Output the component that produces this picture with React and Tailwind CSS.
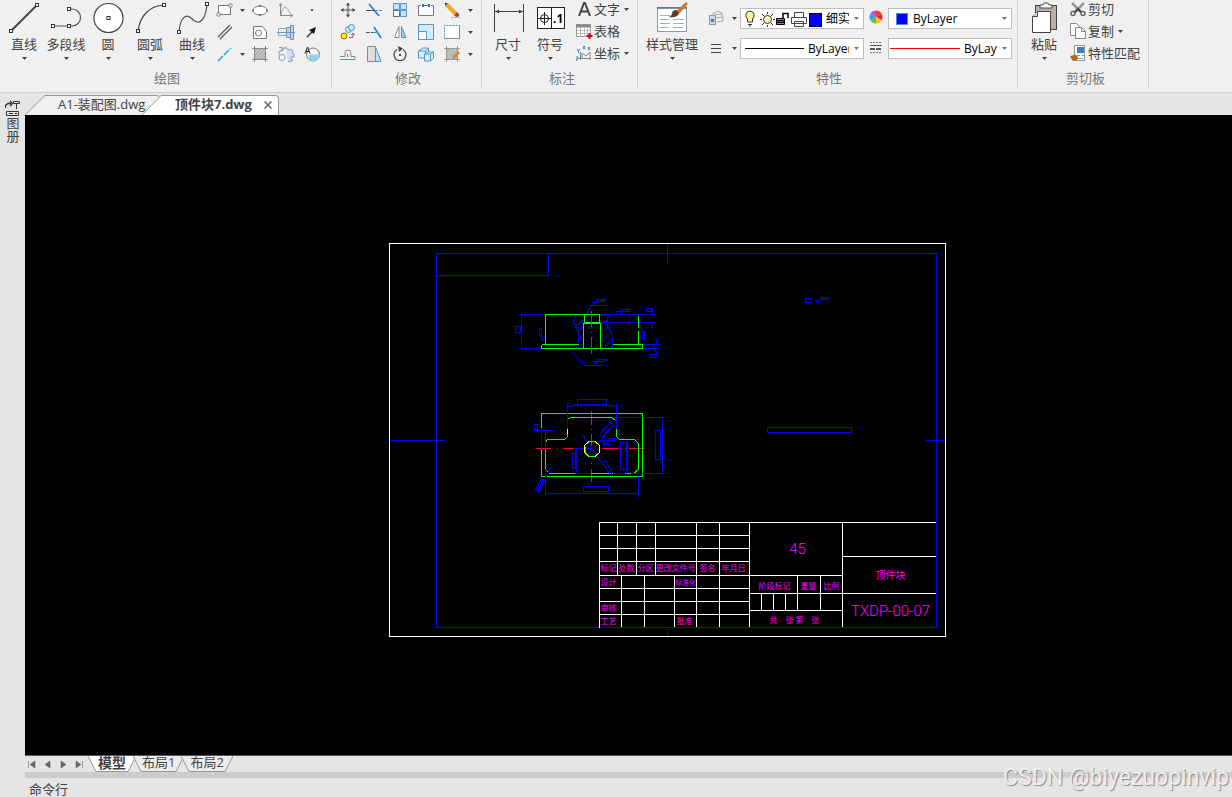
import { useState } from "react";
import clsx from "clsx";

/* ---------- shared bits ---------- */

function Caret({ className = "text-[#444]" }) {
  return (
    <svg width="5" height="3" viewBox="0 0 5 3" className={clsx("shrink-0", className)}>
      <path d="M0 0h5L2.5 3z" fill="currentColor" />
    </svg>
  );
}

function Dot({ x, y }) {
  return <rect x={x - 1.5} y={y - 1.5} width="3" height="3" fill="#fff" stroke="#333" />;
}

function Icon({ children, size = 18 }) {
  return (
    <svg width={size} height={size} viewBox="0 0 18 18" fill="none" className="shrink-0">
      {children}
    </svg>
  );
}

function Group({ title, children, className }) {
  return (
    <section className={clsx("flex h-[88px] shrink-0 flex-col border-r border-[#d2d2d2]", className)}>
      <div className="flex h-[70px]">{children}</div>
      <h2 className="text-center text-[13px] leading-4 text-[#777]">{title}</h2>
    </section>
  );
}

function BigButton({ label, icon, wide }) {
  return (
    <button className={clsx("flex flex-col items-center", wide ? "w-[62px]" : "w-[42px]")}>
      <svg width={wide ? 62 : 42} height="36" fill="none">
        {icon}
      </svg>
      <span className="text-[13px] leading-4 whitespace-nowrap">{label}</span>
      <span className="flex h-3 items-center">
        <Caret />
      </span>
    </button>
  );
}

function ToolButton({ name, children }) {
  return (
    <button aria-label={name} className="flex h-[22px] items-center justify-center pb-[2px]">
      {children}
    </button>
  );
}

function ListButton({ label, icon, caret }) {
  return (
    <button className="flex h-[22px] items-center pb-1">
      <span className="flex w-5 justify-center">{icon}</span>
      <span className="text-[13px] leading-4 whitespace-nowrap">{label}</span>
      {caret && (
        <span className="flex w-3 justify-center">
          <Caret />
        </span>
      )}
    </button>
  );
}

function Combo({ label, options, children }) {
  return (
    <div className="flex h-[21px] items-center border border-[#bdbdbd] bg-white">
      {children}
      <select
        aria-label={label}
        className="h-full min-w-0 flex-1 appearance-none overflow-hidden bg-transparent text-[12px] text-clip text-black outline-none"
      >
        {options.map((o) => (
          <option key={o}>{o}</option>
        ))}
      </select>
      <span className="flex w-[14px] justify-center">
        <Caret className="text-[#777]" />
      </span>
    </div>
  );
}

/* ---------- big icons ---------- */

const lineIcon = (
  <>
    <path d="M8 31L34 5" stroke="#444" strokeWidth="2" />
    <Dot x={8} y={31} />
    <Dot x={34} y={5} />
  </>
);

const polylineIcon = (
  <>
    <path d="M8 26h16h3a8.5 8.5 0 0 0 0-17h-3" stroke="#555" strokeWidth="1.2" />
    <Dot x={8} y={26} />
    <Dot x={24} y={26} />
    <Dot x={24} y={9} />
  </>
);

const circleIcon = (
  <>
    <circle cx="21.5" cy="18" r="14.5" fill="#fff" stroke="#444" strokeWidth="1.2" />
    <Dot x={21.5} y={18} />
  </>
);

const arcIcon = (
  <>
    <path d="M9 31C11 16 20 6 35 5" stroke="#444" strokeWidth="1.2" />
    <Dot x={9} y={31} />
    <Dot x={35} y={5} />
  </>
);

const splineIcon = (
  <>
    <path d="M8 32C9 18 15 13 20 18C29 28 35 18 36 4" stroke="#555" strokeWidth="1.2" />
    <Dot x={8} y={32} />
    <Dot x={36} y={4} />
  </>
);

const dimensionIcon = (
  <>
    <path d="M7.5 4v28M36.500 4v28M8 11.500h28" stroke="#444" />
    <path d="M8 11.500l4-2v4zM36 11.500l-4-2v4z" fill="#444" />
  </>
);

const symbolIcon = (
  <>
    <rect x="8.500" y="7.500" width="27" height="21" fill="#fff" stroke="#222" />
    <path d="M22.500 8v20M15.500 12v13M9 18.500h13" stroke="#222" />
    <circle cx="15.500" cy="18.500" r="4" stroke="#222" />
    <text x="24" y="23" fontSize="12" fontWeight="bold" fill="#000">
      .1
    </text>
  </>
);

const styleIcon = (
  <>
    <rect x="16.500" y="7.500" width="29" height="24" fill="#fff" stroke="#8a9bb0" />
    <path d="M16 8h30" stroke="#58697c" strokeWidth="1.5" />
    <path d="M19 15.500h10M19 19.500h9M32 19.500h11M19 23.500h10M32 23.500h11M19 27.500h9M32 27.500h10" stroke="#9db3c8" />
    <path d="M45 2l-10 9 3 3 8-9c1-2 0-3-1-3z" fill="#c87a32" />
    <path d="M35 10c-3 0-4 2-4 4-1 2-2 3-4 3 5 1 10 0 11-4z" fill="#5a3a20" />
  </>
);

const pasteIcon = (
  <>
    <rect x="12.500" y="5.500" width="21" height="24" fill="#b8b0a4" stroke="#444" />
    <path d="M17 8V5h3l1-2h4l1 2h3v3z" fill="#fff" stroke="#444" />
    <path d="M9.500 16.500l5-5h13v21h-18z" fill="#fff" stroke="#444" />
    <path d="M9.500 16.500h5v-5" fill="#ddd" stroke="#444" />
  </>
);

/* ---------- small icons ---------- */

const icons = {
  rect: (
    <Icon>
      <rect x="2.500" y="4.500" width="12" height="9" fill="#fff" stroke="#777" />
      <path d="M1 12h3v3H1zM13 3h3v3h-3z" fill="#fff" stroke="#888" />
    </Icon>
  ),
  ellipse: (
    <Icon>
      <ellipse cx="9" cy="9.500" rx="7" ry="4.500" fill="#fff" stroke="#777" />
      <path d="M1 8.500h2v2H1zM15 8.500h2v2h-2zM8 4h2v2H8zM8 13h2v2H8z" fill="#777" />
    </Icon>
  ),
  graph: (
    <Icon>
      <path d="M3.500 3v12M3 14.500h12" stroke="#888" />
      <path d="M4 14C6 4 9 4 13 12M2 5l1.500-3L5 5M13 12.500l3 2-3 2" stroke="#999" />
    </Icon>
  ),
  point: (
    <Icon>
      <rect x="8" y="8" width="2" height="2" fill="#555" />
    </Icon>
  ),
  doubleLine: (
    <Icon>
      <path d="M2 14L14 2M4 16L16 4" stroke="#555" strokeWidth="1.2" />
    </Icon>
  ),
  region: (
    <Icon>
      <path d="M2.500 3.500h9l4 5v7h-13z" fill="#fff" stroke="#777" />
      <circle cx="7.500" cy="10" r="3" fill="#fff" stroke="#777" />
    </Icon>
  ),
  shaft: (
    <Icon>
      <path d="M1.500 5.500h8v7h-8z" fill="#e4eef8" stroke="#9aa5b0" />
      <path d="M9.500 4.500h4v10h-4zM13.500 2.500h3v14h-3z" fill="#b5d3ee" stroke="#8290a0" />
      <path d="M0 9.500h18" stroke="#5b9bd8" />
    </Icon>
  ),
  arrow: (
    <Icon>
      <path d="M4 14l5-5" stroke="#222" strokeWidth="1.2" />
      <path d="M13 4l-2 7-5-4z" fill="#111" />
    </Icon>
  ),
  blueLine: (
    <Icon>
      <path d="M2 16L15 3" stroke="#29a3dc" strokeWidth="1.500" strokeDasharray="7 1.500" />
    </Icon>
  ),
  hatch: (
    <Icon>
      <rect x="3.500" y="3.500" width="11" height="11" fill="#b4b4b4" stroke="#888" />
      <path d="M1 3.500h16M1 14.500h16M3.500 1v16M14.500 1v16" stroke="#888" />
      <path d="M4 8l4-4M4 12l8-8M6 14l8-8M10 14l4-4" stroke="#ccc" />
    </Icon>
  ),
  gear: (
    <Icon>
      <path
        d="M6 6V3h3V1.500M9 3l3 2 1-1 3 2-1 2 2 1v3h-3v3h2l-2 1.500h-3"
        fill="#cfe1f2"
        stroke="#8aa0b8"
      />
      <circle cx="5" cy="12.500" r="3" fill="#fff" stroke="#7a94b0" />
      <path d="M2 2.500h3v3l-3 1v3" stroke="#7a94b0" />
    </Icon>
  ),
  annoCircle: (
    <Icon>
      <circle cx="10" cy="9.500" r="6.500" fill="#f4f4f4" stroke="#777" />
      <path d="M6 9.500h10.500A6.500 6.500 0 0 1 6 14.500z" fill="#8fd3f2" />
      <path d="M2 8.500L4.500 2 7 8.500M3 6.500h3" stroke="#222" />
    </Icon>
  ),
  move: (
    <Icon>
      <path d="M9 3v4M9 11v4M3 9h4M11 9h4" stroke="#555" />
      <path d="M9 1.500L7 4.500h4zM9 16.500L7 13.500h4zM1.500 9l3-2v4zM16.500 9l-3-2v4z" fill="#444" />
      <rect x="8" y="8" width="2" height="2" fill="#fff" stroke="#555" />
    </Icon>
  ),
  trim: (
    <Icon>
      <path d="M4 3l10 12" stroke="#1f7ad0" strokeWidth="1.500" />
      <path d="M1 9.500h8" stroke="#555" />
      <path d="M10 9.500h7" stroke="#29a3dc" strokeDasharray="3 1" />
    </Icon>
  ),
  array: (
    <Icon>
      <path d="M2.500 2.500h6v6h-6zM9.500 2.500h6v6h-6zM9.500 9.500h6v6h-6z" fill="#bfe3f7" stroke="#5a95be" />
      <path d="M2.500 9.500h6v6h-6z" fill="#fff" stroke="#5a6d80" />
    </Icon>
  ),
  breakAt: (
    <Icon>
      <path d="M4 4.500H1.500v10h15v-10H14M7 4.500h4" fill="#fff" stroke="#777" />
      <path d="M5 3h2v3H5zM11 3h2v3h-2z" fill="#1f7ad0" />
    </Icon>
  ),
  erase: (
    <Icon>
      <path d="M2 2l3 0 9 9-3 3-9-9z" fill="#f5a623" />
      <path d="M11 14l3-3 2 2c1 2-1 3-3 3z" fill="#a3452c" />
      <path d="M2 5V2h3z" fill="#444" />
      <path d="M8 16.500h9" stroke="#bbb" />
    </Icon>
  ),
  copyObj: (
    <Icon>
      <circle cx="5" cy="13" r="3" fill="#ffe500" stroke="#8a7a00" />
      <circle cx="9.500" cy="6.500" r="3" fill="#cfe9f8" stroke="#4a8ec2" />
      <circle cx="12.500" cy="4.500" r="3" fill="#cfe9f8" stroke="#4a8ec2" />
      <path d="M10 14.500h4v-4M12.500 12l1.500-2 1.500 2" stroke="#a55" />
    </Icon>
  ),
  extend: (
    <Icon>
      <path d="M9 4l7 11" stroke="#1f7ad0" strokeWidth="1.500" />
      <path d="M1 9.500h7" stroke="#555" strokeDasharray="4 1" />
      <path d="M8 9.500h5" stroke="#29a3dc" />
    </Icon>
  ),
  mirror: (
    <Icon>
      <path d="M8 3.500v11H3.500z" fill="#fff" stroke="#888" />
      <path d="M10.500 3.500v11H15z" fill="#9ccbea" stroke="#5a95be" />
    </Icon>
  ),
  scale: (
    <Icon>
      <rect x="1.500" y="1.500" width="15" height="15" fill="#cfeafa" stroke="#5a95be" />
      <rect x="1.500" y="8.500" width="8" height="8" fill="#fff" stroke="#5a95be" />
    </Icon>
  ),
  stretch: (
    <Icon>
      <rect x="1.500" y="2.500" width="15" height="13" fill="#fff" stroke="#888" />
      <path d="M1.500 15.500v-13h15" stroke="#fff" />
      <path d="M1.500 15.500v-13h15" stroke="#4a90d0" strokeDasharray="2 1" />
    </Icon>
  ),
  offset: (
    <Icon>
      <path d="M1 11.500h5V8a3 3 0 0 1 6 0v3.500h4v3H1" stroke="#888" />
      <path d="M8.500 12V9M2 14.500h14" stroke="#5a95be" />
    </Icon>
  ),
  taper: (
    <Icon>
      <path d="M2.500 1.500h8v15h-8z" fill="#ddd" stroke="#888" />
      <path d="M10.500 2l5.500 14.500h-5.500z" fill="#bfe3f7" stroke="#5a95be" />
    </Icon>
  ),
  rotate: (
    <Icon>
      <path d="M6 4.500A6 6 0 1 0 12 4.500" stroke="#444" strokeWidth="1.300" />
      <path d="M7 1l5 2.500L8 7z" fill="#444" />
      <rect x="8" y="9" width="2" height="2" fill="#444" />
    </Icon>
  ),
  block: (
    <Icon>
      <path d="M1.500 6l4-3h6v7l-3 3h-7zM1.500 6h7v7M8.500 6l3-3" fill="#d5ecfa" stroke="#5a95be" />
      <path d="M7.500 9l3-2h6v6l-3 3h-6zM7.500 9h6v7M13.500 9l3-2" fill="#d5ecfa" stroke="#5a95be" />
    </Icon>
  ),
  editHatch: (
    <Icon>
      <rect x="3.500" y="3.500" width="11" height="11" fill="#b4b4b4" stroke="#888" />
      <path d="M1 3.500h16M1 14.500h16M3.500 1v16M14.500 1v16" stroke="#999" />
      <path d="M4 9l5-5M4 13l9-9M7 14l7-7" stroke="#d0d0d0" />
      <path d="M15 6l2 2-5 5-3 1 1-3z" fill="#d4883a" />
    </Icon>
  ),
  letterA: (
    <Icon>
      <path d="M4 16L9 3h1l5 13M6 11.500h7" stroke="#444" strokeWidth="2" />
    </Icon>
  ),
  table: (
    <Icon>
      <rect x="1.500" y="2.500" width="14" height="12" fill="#fff" stroke="#999" />
      <path d="M1 4h15" stroke="#888" strokeWidth="3" />
      <path d="M2 8.500h14M2 11.500h14M5.500 5v10M9.500 5v10M12.500 5v10" stroke="#bbb" />
      <path d="M14.500 11v6M11.500 14h6" stroke="#d00020" strokeWidth="2" />
    </Icon>
  ),
  coords: (
    <Icon>
      <path d="M5.500 8v8M3 14.500h13M7 14V9l4 3 4-4v8" stroke="#888" />
      <path d="M2 5l1.500 2L5 5M3.500 7v2M8 2l2 3M10 2L8 5M13 3l2 3M15 3l-2 3M1 13h2l-2 3h2" stroke="#3a8ac8" />
    </Icon>
  ),
  layerStates: (
    <Icon>
      <path d="M2.500 6.500h6v9h-6z" fill="#cfdbe6" stroke="#8a97a5" />
      <path d="M4 10h3v3H4z" fill="#3a7fc0" />
      <path d="M5 5l6-3 5 3M7 6l7-1 2 3M9 9l7-1v4l-6 1" stroke="#aaa" />
    </Icon>
  ),
  lines: (
    <Icon>
      <path d="M4 5.500h10M4 9.500h10M4 13.500h10" stroke="#444" />
    </Icon>
  ),
  wheel: (
    <Icon>
      <path d="M9 9V2.500a6.500 6.500 0 0 1 5.600 3.250z" fill="#f33" />
      <path d="M9 9l5.600-3.250a6.500 6.500 0 0 1 0 6.500z" fill="#e0284f" />
      <path d="M9 9l5.600 3.250A6.500 6.500 0 0 1 9 15.500z" fill="#f7c325" />
      <path d="M9 9v6.500a6.500 6.500 0 0 1-5.600-3.250z" fill="#5cc83b" />
      <path d="M9 9l-5.600 3.250a6.500 6.500 0 0 1 0-6.500z" fill="#2f9be8" />
      <path d="M9 9L3.400 5.750A6.500 6.500 0 0 1 9 2.500z" fill="#a45de5" />
    </Icon>
  ),
  weights: (
    <Icon>
      <path d="M3 4.500h12M3 14.500h12" stroke="#777" strokeDasharray="2 1" />
      <path d="M3 7.500h12" stroke="#555" />
      <path d="M3 11h12" stroke="#555" strokeWidth="2" strokeDasharray="5 1" />
    </Icon>
  ),
  cut: (
    <Icon>
      <path d="M3 3l9 9M15 3l-9 9" stroke="#999" strokeWidth="2.500" />
      <circle cx="4" cy="13.500" r="2" stroke="#666" strokeWidth="1.500" />
      <circle cx="14" cy="13.500" r="2" stroke="#666" strokeWidth="1.500" />
      <path d="M6 12l3-3 3 3" stroke="#444" strokeWidth="2" />
    </Icon>
  ),
  copy: (
    <Icon>
      <path d="M1.500 1.500h6l3 3v9h-9z" fill="#fff" stroke="#888" />
      <path d="M6.500 5.500h6l4 4v7h-10z" fill="#fff" stroke="#888" />
      <path d="M12.500 5.500v4h4" stroke="#888" />
    </Icon>
  ),
  match: (
    <Icon>
      <rect x="5.500" y="1.500" width="10" height="15" fill="#fff" stroke="#8a97a5" />
      <path d="M8 3h7v6H8z" fill="#3a7fc0" />
      <path d="M8 11.500h3M8 14.500h6M13 11.500h2" stroke="#8a97a5" />
      <path d="M1 12c3 0 3-2 6-1l2 2c0 3-4 5-6 3z" fill="#b5651d" />
    </Icon>
  ),
};

/* ---------- ribbon ---------- */

function Ribbon() {
  return (
    <header className="flex h-[93px] border-b border-[#d0d0d0] bg-[#f0f0f0] text-[#444]">
      <Group title="绘图" className="w-[332px] pl-[3px]">
        <BigButton label="直线" icon={lineIcon} />
        <BigButton label="多段线" icon={polylineIcon} />
        <BigButton label="圆" icon={circleIcon} />
        <BigButton label="圆弧" icon={arcIcon} />
        <BigButton label="曲线" icon={splineIcon} />
        <div className="grid grid-cols-[24px_10px_26px_26px_26px] content-start">
          <ToolButton name="矩形">{icons.rect}</ToolButton>
          <ToolButton name="矩形选项">
            <Caret />
          </ToolButton>
          <ToolButton name="椭圆">{icons.ellipse}</ToolButton>
          <ToolButton name="公式曲线">{icons.graph}</ToolButton>
          <ToolButton name="点">{icons.point}</ToolButton>
          <ToolButton name="双线">{icons.doubleLine}</ToolButton>
          <span />
          <ToolButton name="面域">{icons.region}</ToolButton>
          <ToolButton name="轴">{icons.shaft}</ToolButton>
          <ToolButton name="箭头">{icons.arrow}</ToolButton>
          <ToolButton name="构造线">{icons.blueLine}</ToolButton>
          <ToolButton name="构造线选项">
            <Caret />
          </ToolButton>
          <ToolButton name="填充">{icons.hatch}</ToolButton>
          <ToolButton name="齿轮">{icons.gear}</ToolButton>
          <ToolButton name="局部放大">{icons.annoCircle}</ToolButton>
        </div>
      </Group>

      <Group title="修改" className="w-[150px] pl-[3px]">
        <div className="grid grid-cols-[26px_26px_26px_26px_26px_10px] content-start">
          <ToolButton name="移动">{icons.move}</ToolButton>
          <ToolButton name="裁剪">{icons.trim}</ToolButton>
          <ToolButton name="阵列">{icons.array}</ToolButton>
          <ToolButton name="打断">{icons.breakAt}</ToolButton>
          <ToolButton name="删除">{icons.erase}</ToolButton>
          <ToolButton name="删除选项">
            <Caret />
          </ToolButton>
          <ToolButton name="平移复制">{icons.copyObj}</ToolButton>
          <ToolButton name="延伸">{icons.extend}</ToolButton>
          <ToolButton name="镜像">{icons.mirror}</ToolButton>
          <ToolButton name="缩放">{icons.scale}</ToolButton>
          <ToolButton name="拉伸">{icons.stretch}</ToolButton>
          <ToolButton name="拉伸选项">
            <Caret />
          </ToolButton>
          <ToolButton name="等距">{icons.offset}</ToolButton>
          <ToolButton name="过渡">{icons.taper}</ToolButton>
          <ToolButton name="旋转">{icons.rotate}</ToolButton>
          <ToolButton name="分解">{icons.block}</ToolButton>
          <ToolButton name="编辑填充">{icons.editHatch}</ToolButton>
          <ToolButton name="编辑填充选项">
            <Caret />
          </ToolButton>
        </div>
      </Group>

      <Group title="标注" className="w-[156px] pl-[5px]">
        <BigButton label="尺寸" icon={dimensionIcon} />
        <BigButton label="符号" icon={symbolIcon} />
        <div className="flex flex-col items-start pl-[3px]">
          <ListButton label="文字" icon={icons.letterA} caret />
          <ListButton label="表格" icon={icons.table} />
          <ListButton label="坐标" icon={icons.coords} caret />
        </div>
      </Group>

      <Group title="特性" className="w-[380px] pl-[3px]">
        <BigButton label="样式管理" icon={styleIcon} wide />
        <div className="grid grid-cols-[25px_12px_124px_24px_124px] content-start items-start gap-y-2 pt-2">
          <ToolButton name="图层">{icons.layerStates}</ToolButton>
          <ToolButton name="图层选项">
            <Caret />
          </ToolButton>
          <Combo label="当前图层" options={["细实线层", "粗实线层"]}>
            <svg width="81" height="19" fill="none" className="mr-1 shrink-0">
              <path d="M9 2a4.500 4.500 0 0 0-2.500 8v3h5v-3A4.500 4.500 0 0 0 9 2z" fill="#fff3a0" stroke="#333" />
              <path d="M7 15.500h4M8 17h2" stroke="#333" />
              <circle cx="26.500" cy="10.500" r="4" fill="#fff8c0" stroke="#333" />
              <path d="M26.500 3v2M26.500 16v2M19 10.500h2M32 10.500h2M21 5l2 2M32 5l-2 2M21 16l2-2M32 16l-2-2" stroke="#333" />
              <path d="M35.500 9.500h8v6h-8z" fill="#c8c800" stroke="#000" />
              <path d="M35 11.500h9M35 13.500h9M42 9V4.500h5V9" stroke="#000" strokeWidth="1.500" />
              <path d="M53.500 3.500h9v5h-9zM50.500 8.500h15v6h-15zM53.500 12.500h9v5h-9z" fill="#fff" stroke="#444" />
              <rect x="68.500" y="4.500" width="12" height="13" fill="#00f" stroke="#000" />
            </svg>
          </Combo>
          <span className="flex justify-center">{icons.wheel}</span>
          <Combo label="颜色" options={["ByLayer", "ByBlock"]}>
            <span className="mr-[5px] ml-[7px] size-3 shrink-0 border border-[#3a8fe0] bg-[#0000ff]" />
          </Combo>
          <ToolButton name="线宽">{icons.lines}</ToolButton>
          <ToolButton name="线宽选项">
            <Caret />
          </ToolButton>
          <Combo label="线宽" options={["ByLayer", "ByBlock"]}>
            <span className="mr-1 ml-1 h-px w-[59px] shrink-0 bg-black" />
          </Combo>
          <span className="flex justify-center">{icons.weights}</span>
          <Combo label="线型" options={["ByLayer", "ByBlock"]}>
            <span className="mr-1 ml-px h-px w-[70px] shrink-0 bg-[#f00]" />
          </Combo>
        </div>
      </Group>

      <Group title="剪切板" className="w-[131px] pl-[5px]">
        <BigButton label="粘贴" icon={pasteIcon} />
        <div className="flex flex-col items-start pl-[3px]">
          <ListButton label="剪切" icon={icons.cut} />
          <ListButton label="复制" icon={icons.copy} caret />
          <ListButton label="特性匹配" icon={icons.match} />
        </div>
      </Group>
    </header>
  );
}

/* ---------- file tabs ---------- */

function FileTabs() {
  return (
    <nav className="flex h-[22px] items-end bg-[#e5e5e5] text-[13px] text-[#444]">
      <button className="flex h-5 items-stretch">
        <svg width="20" height="20" fill="none">
          <path d="M0 20L20 0.500V20z" fill="#f0f0f0" />
          <path d="M0 20L20 0.500" stroke="#999" />
        </svg>
        <span className="w-[115px] rounded-tr border-t border-[#999] bg-[#f0f0f0] pl-[13px] text-left leading-4 whitespace-nowrap">
          A1-装配图.dwg
        </span>
      </button>
      <div className="-ml-[18px] flex h-5 items-stretch">
        <svg width="19" height="20" fill="none">
          <path d="M0 20L19 0.500V20z" fill="#fff" />
          <path d="M0 20L19 0.500" stroke="#999" />
        </svg>
        <div className="flex w-[118px] items-start justify-between rounded-tr border-t border-r border-[#999] bg-white pr-[6px] pl-[14px]">
          <button className="leading-4 font-bold whitespace-nowrap">顶件块7.dwg</button>
          <button aria-label="关闭" className="flex h-[18px] items-center">
            <svg width="8" height="8" stroke="#666" strokeWidth="1.500">
              <path d="M0.500 0.500l7 7M7.500 0.500l-7 7" />
            </svg>
          </button>
        </div>
      </div>
    </nav>
  );
}

/* ---------- drawing ---------- */

function TitleText({ x, y, size = 8, children }) {
  return (
    <text x={x} y={y} fontSize={size} textAnchor="middle" dominantBaseline="central" fill="#f0f">
      {children}
    </text>
  );
}

const titleCells = [
  [608, 568, "标记"],
  [626, 568, "处数"],
  [645, 568, "分区"],
  [675, 568, "更改文件号"],
  [707, 568, "签名"],
  [733, 568, "年月日"],
  [608, 582, "设计"],
  [685, 582, "标准化", 7],
  [608, 608, "审核"],
  [608, 621, "工艺"],
  [684, 621, "批准"],
  [774, 586, "阶段标记"],
  [808, 586, "重量"],
  [831, 586, "比例"],
  [773, 620, "共"],
  [789, 620, "张"],
  [799, 620, "第"],
  [815, 620, "张"],
];

function Drawing() {
  return (
    <svg
      viewBox="25 115 1207 640"
      className="block h-full w-full"
      fill="none"
      shapeRendering="crispEdges"
      fontFamily="Roboto, 'Noto Sans CJK SC', sans-serif"
    >
      <g transform="translate(0.5 0.5)">
        {/* sheet frame */}
        <path
          d="M436 253h500v374h-500zM436 275h112v-22M667 243v20M667 628v8M389 440h56M925 440h19"
          stroke="#00f"
        />
        <path d="M389 243h556v393h-556z" stroke="#fff" />

        {/* front view */}
        <g stroke="#00f">
          <path d="M519 314h24M600 314h55M521 314v34M519 348h22M642 344h16M642 348h17M600 322h55" />
          <path d="M515 326h5v6h-5zM646 308h5v3h-5zM650 354h6v3h-6zM642 331h2v8h-2z" />
          <path d="M539 327v8l2 1v4h2l1-3h-3v-9h-2M652 307v7M652 322l-1 3 1 4M656 337v5l-1 3M655 349l1 4v4M639 327h2v4" />
          <path d="M585 317l5-12h16M592 302h4l-2 3zM597 299h8l-1 2h-8zM616 311h4v3h-3zM621 309h8l-1 2h-8z" />
          <path d="M569 349l16 16h16M593 361h4l-2 3zM598 359h8l-1 2h-8z" />
          <path d="M576 314l-2 4-1 4 2 4 3 5v9l-1 5-2 3M608 314l-1 5-1 4 4 8 2 7v10" />
          <path d="M585 317l-11 10M582 326l-4 5M582 335l-3 4M582 343l-4 5M601 314v3M607 319l-6 5M607 327l-6 6M610 332l-9 9M611 339l-8 9" />
        </g>
        <g stroke="#0f0">
          <path d="M545 344v-30h54M638 315v12M638 330v14M541 344h37M612 344h30v4H541v-4M584 314v8h15v-8" />
          <path d="M583 348v-25h17v25" />
        </g>
        <path d="M591 310v16M591 331v1M591 336v17" stroke="#f03" />

        {/* top view */}
        <path
          d="M535 448h15M556 448h1M562 448h11M601 448h17M624 448h1M628 448h16M591 410v14M591 428v1M591 433v12M591 462v1M591 468v13"
          stroke="#f03"
        />
        <path d="M541 413h101v63H541z" stroke="#0f0" />
        <path
          d="M567 436v-17l3-2h41l4 3M616 428v8l3 3h15l4 4v26l-5 4H549l-4-4v-27l2-3h17l3-3"
          stroke="#0f0"
        />
        <g stroke="#00f">
          <path d="M567 403v25M616 403v25M567 406h4l1-1h40l1 1h3M577 399h29v5H577z" />
          <path d="M611 417h53M612 473h12M630 473h34M662 418v55M655 430h5v29h-5z" />
          <path d="M545 468v28M638 474v22M545 493h93M583 486h25v5H583z" />
          <path d="M533 430h20M534 424h3v5h-3zM541 427v21M545 427v21" />
          <path d="M550 467l-5 11M541 478l3 2-6 12-3-2zM543 479l-6 12" />
          <path d="M574 448h17M576 448v25M574 473h16M572 453h3v15h-3z" />
          <path d="M620 442h7v27h-7zM626 440v33" />
          <path d="M582 435l19 27M581 460l16-16M597 444l16-20M599 434l11-12 3 2-11 12zM602 462l3-2 7 12-2 3z" />
          <path d="M602 444h10M602 440h6l-4 4zM609 438h7l-1 2h-8z" />
        </g>
        <path d="M567 428v5" stroke="#ff0" />
        <circle cx="591.5" cy="448.5" r="8" stroke="#ff0" />
        <path d="M586 444l3-3h5l3 3M586 453l3 3h5l3-3M585 446v6" stroke="#0f0" />

        {/* loose notes */}
        <path
          d="M805 298h6v4h-6zM815 300h4l-2 3zM820 297h8l-1 2h-7zM767 427h84v5h-84z"
          stroke="#00f"
        />

        {/* title block */}
        <g stroke="#fff">
          <path d="M599 627V522h336M599 535h150M599 548h150M599 561h150M599 575h243M599 588h150M599 601h150M599 614h150" />
          <path d="M617 522v53M636 522v53M655 522v53M696 522v105M719 522v105M749 522v105" />
          <path d="M621 575v52M644 575v52M674 575v52M842 522v105" />
          <path d="M749 593h93M749 610h93M797 575v35M820 575v35M761 593v17M773 593v17M785 593v17" />
          <path d="M842 556h93M842 593h93" />
        </g>
        <path d="M599 627h337" stroke="#00f" />
        {titleCells.map(([x, y, label, size]) => (
          <TitleText key={`${x}-${y}`} x={x} y={y} size={size}>
            {label}
          </TitleText>
        ))}
        <g fontWeight="300">
          <TitleText x={797} y={548} size={15}>
            45
          </TitleText>
          <TitleText x={890} y={610} size={15}>
            TXDP-00-07
          </TitleText>
        </g>
        <TitleText x={890} y={575} size={10}>
          顶件块
        </TitleText>
      </g>
    </svg>
  );
}

/* ---------- layout tabs ---------- */

const navArrows = [
  ["第一个", "M1.5 1v7M8 1v7L3 4.500z"],
  ["上一个", "M7 1v7L2 4.500z"],
  ["下一个", "M2 1v7l5-3.500z"],
  ["最后一个", "M7.500 1v7M1 1v7l5-3.500z"],
];

function LayoutTabs({ active, onSelect }) {
  return (
    <div className="flex h-[17px] items-start border-t border-[#555] bg-[#e5e5e5] pl-px text-[#444]">
      <div className="flex h-4 items-center gap-[7px] pr-1 pl-px">
        {navArrows.map(([name, d]) => (
          <button key={name} aria-label={name}>
            <svg width="9" height="9" fill="#666" stroke="#666" strokeWidth="0.600">
              <path d={d} />
            </svg>
          </button>
        ))}
      </div>
      {["模型", "布局1", "布局2"].map((name) => {
        const on = name === active;
        return (
          <button key={name} onClick={() => onSelect(name)} className="-mr-[3px] flex h-4">
            <svg width="8" height="16" fill="none">
              <path d="M0 0L8 15.500V0z" fill={on ? "#fff" : "#ececec"} />
              <path d="M0 0L8 15.500" stroke="#999" />
            </svg>
            <span
              className={clsx(
                "h-4 border-b border-[#999] leading-[13px] whitespace-nowrap",
                on ? "bg-white px-[2px] text-[14px] font-bold" : "bg-[#ececec] px-px text-[13px]"
              )}
            >
              {name}
            </span>
            <svg width="8" height="16" fill="none">
              <path d="M8 0L0 15.500V0z" fill={on ? "#fff" : "#ececec"} />
              <path d="M8 0L0 15.500" stroke="#999" />
            </svg>
          </button>
        );
      })}
    </div>
  );
}

export default function App() {
  const [active, setActive] = useState("模型");

  return (
    <div className="relative flex h-screen flex-col overflow-hidden bg-[#e5e5e5] font-['Open_Sans','Noto_Sans_CJK_SC',sans-serif]">
      <Ribbon />
      <div className="flex min-h-0 flex-1">
        <aside className="flex w-[25px] shrink-0 flex-col items-center pt-[7px] text-[#444]">
          <svg width="15" height="17" fill="none" stroke="#333">
            <path d="M0.500 8V5.500L3 3.500h3M5 1l2.500 2.500L5 6" strokeWidth="1.300" />
            <path d="M8.500 1.500h6v2h-6zM11.500 4v5" />
            <path d="M1.500 11.500h12v4h-12zM4 13.500h4M10 13.500h2" />
          </svg>
          <span className="text-[13px] leading-4 [writing-mode:vertical-rl]">图册</span>
        </aside>
        <main className="flex min-w-0 flex-1 flex-col">
          <FileTabs />
          <div className="min-h-0 flex-1 bg-black">
            <Drawing />
          </div>
          <LayoutTabs active={active} onSelect={setActive} />
          <div className="h-[6px] bg-[#ccc]" />
          <label className="flex h-[19px] items-center pt-[2px] pl-1 text-[13px] leading-4 text-[#444]">
            命令行
            <input className="ml-2 h-4 flex-1 bg-transparent outline-none" />
          </label>
        </main>
      </div>
      <p className="pointer-events-none absolute right-[3px] bottom-[5px] font-['Roboto',sans-serif] text-[23px] leading-7 text-[#eee] [text-shadow:1px_1px_1px_#888]">
        CSDN @biyezuopinvip
      </p>
    </div>
  );
}
